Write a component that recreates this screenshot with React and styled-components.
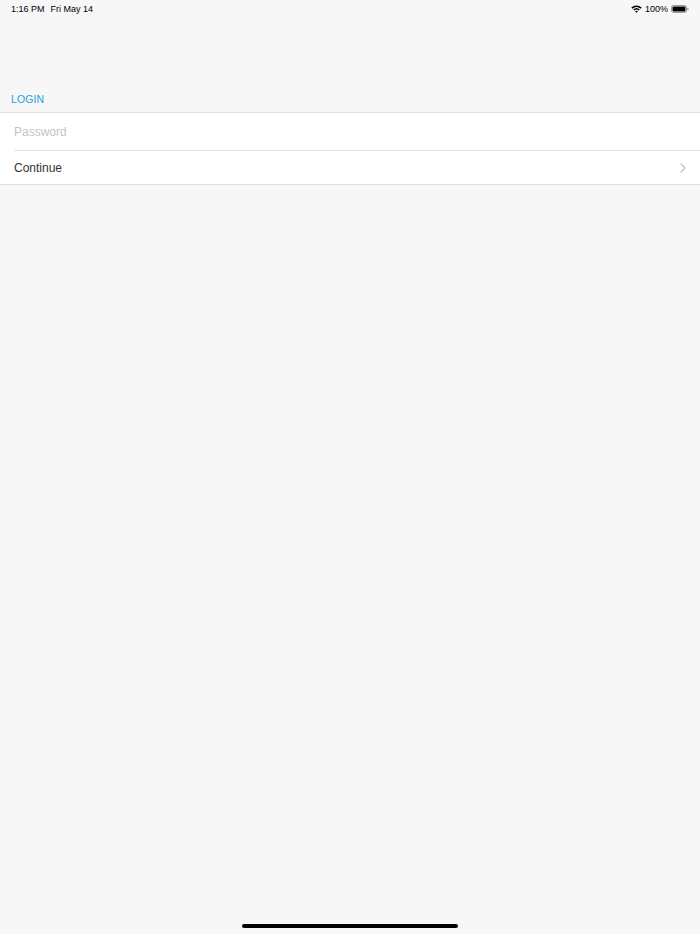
import React from 'react';
import styled, { createGlobalStyle } from 'styled-components';

const GlobalStyle = createGlobalStyle`
  html, body {
    margin: 0;
    padding: 0;
    background: #f7f7f7;
    font-family: "Liberation Sans", Arial, sans-serif;
  }
`;

const Screen = styled.div`
  width: 700px;
  height: 934px;
  background: #f7f7f7;
  display: flex;
  flex-direction: column;
  overflow: hidden;
`;

const StatusBar = styled.div`
  height: 17px;
  display: flex;
  align-items: center;
  justify-content: space-between;
  padding: 0 11px 0 11px;
  font-size: 9px;
  color: #000;
`;

const Clock = styled.div`
  display: flex;
  gap: 6px;
  font-weight: 500;
`;

const StatusRight = styled.div`
  display: flex;
  align-items: center;
  gap: 3px;
`;

const SectionHeader = styled.div`
  margin-top: 76px;
  padding: 0 11px;
  height: 19px;
  font-size: 10.5px;
  color: #1ea3d2;
  letter-spacing: 0.1px;
`;

const Group = styled.div`
  background: #fff;
  border-top: 1px solid #dedede;
  border-bottom: 1px solid #dedede;
`;

const Row = styled.div`
  height: ${p => p.h}px;
  margin-left: 14px;
  padding-right: 14px;
  display: flex;
  align-items: center;
  justify-content: space-between;
  font-size: 12px;
  color: ${p => (p.placeholder ? '#c4c4c7' : '#333')};
  border-bottom: ${p => (p.divider ? '1px solid #e2e2e2' : 'none')};
`;

const Spacer = styled.div`
  flex: 1;
`;

const HomeIndicator = styled.div`
  align-self: center;
  width: 216px;
  height: 4px;
  border-radius: 2px;
  background: #000;
  margin-bottom: 6px;
`;

const Wifi = () => (
  <svg width="11" height="8" viewBox="0 0 11 8">
    <path d="M0.3 2.6 A7.5 7.5 0 0 1 10.7 2.6 L9.6 3.7 A6 6 0 0 0 1.4 3.7 Z" fill="#000" />
    <path d="M2.2 4.5 A4.8 4.8 0 0 1 8.8 4.5 L7.7 5.6 A3.2 3.2 0 0 0 3.3 5.6 Z" fill="#000" />
    <path d="M4.1 6.4 A2 2 0 0 1 6.9 6.4 L5.5 7.8 Z" fill="#000" />
  </svg>
);

const Battery = () => (
  <svg width="18" height="8" viewBox="0 0 18 8">
    <rect x="0.5" y="0.5" width="15" height="7" rx="1.8" fill="none" stroke="#9a9a9a" strokeWidth="1" />
    <rect x="1.5" y="1.5" width="13" height="5" rx="1" fill="#000" />
    <rect x="16.3" y="2.7" width="1.2" height="2.6" rx="0.5" fill="#9a9a9a" />
  </svg>
);

const Chevron = () => (
  <svg width="6" height="10" viewBox="0 0 6 10">
    <path d="M1 1 L5 5 L1 9" fill="none" stroke="#c4c4c7" strokeWidth="1.4" strokeLinecap="round" strokeLinejoin="round" />
  </svg>
);

export default function App() {
  return (
    <Screen>
      <GlobalStyle />
      <StatusBar>
        <Clock>
          <span>1:16 PM</span>
          <span>Fri May 14</span>
        </Clock>
        <StatusRight>
          <Wifi />
          <span>100%</span>
          <Battery />
        </StatusRight>
      </StatusBar>
      <SectionHeader>LOGIN</SectionHeader>
      <Group>
        <Row h={37} divider placeholder>Password</Row>
        <Row h={33}>
          <span>Continue</span>
          <Chevron />
        </Row>
      </Group>
      <Spacer />
      <HomeIndicator />
    </Screen>
  );
}
